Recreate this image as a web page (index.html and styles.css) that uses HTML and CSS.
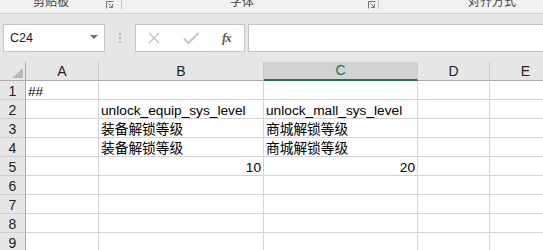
FILE: index.html
```html
<!doctype html>
<html>
<head>
<meta charset="utf-8">
<title>Sheet1</title>
<link rel="stylesheet" href="styles.css">
</head>
<body>
<div class="ribbon">
	<span class="rlabel g1">剪贴板</span>
	<svg class="launch l1" width="8" height="8" viewBox="0 0 8 8"><path d="M0.5 7.5V0.5H7.5M2.5 2.5L6.5 6.5M3 6.5H6.5V3" fill="none" stroke="#777" stroke-width="1"/></svg>
	<span class="rsep s1"></span>
	<span class="rlabel g2">字体</span>
	<svg class="launch l2" width="8" height="8" viewBox="0 0 8 8"><path d="M0.5 7.5V0.5H7.5M2.5 2.5L6.5 6.5M3 6.5H6.5V3" fill="none" stroke="#777" stroke-width="1"/></svg>
	<span class="rsep s2"></span>
	<span class="rlabel g3">对齐方式</span>
</div>

<div class="fbar">
	<div class="namebox">
		<span class="ref">C24</span>
		<span class="caret"></span>
	</div>
	<div class="grip"><i></i><i></i><i></i></div>
	<div class="fbtns">
		<svg class="ico-x" width="12" height="12" viewBox="0 0 12 12"><path d="M1 1L11 11M11 1L1 11" stroke="#bdbdbd" stroke-width="1.2"/></svg>
		<svg class="ico-ok" width="17" height="13" viewBox="0 0 17 13"><path d="M1 6.5L5.5 11L15.5 1" fill="none" stroke="#c4c4c4" stroke-width="2"/></svg>
		<span class="fx">fx</span>
	</div>
	<div class="finput"></div>
</div>

<div class="sheet">
	<div class="hd corner"><svg width="11" height="10" viewBox="0 0 11 10"><polygon points="11,0 11,10 0,10" fill="#b8b8b8"/></svg></div>
	<div class="hd col">A</div>
	<div class="hd col">B</div>
	<div class="hd col sel">C</div>
	<div class="hd col">D</div>
	<div class="hd col">E</div>

	<div class="hd row">1</div>
	<div class="c">##</div><div class="c"></div><div class="c"></div><div class="c"></div><div class="c"></div>

	<div class="hd row">2</div>
	<div class="c"></div><div class="c">unlock_equip_sys_level</div><div class="c">unlock_mall_sys_level</div><div class="c"></div><div class="c"></div>

	<div class="hd row">3</div>
	<div class="c"></div><div class="c zh">装备解锁等级</div><div class="c zh">商城解锁等级</div><div class="c"></div><div class="c"></div>

	<div class="hd row">4</div>
	<div class="c"></div><div class="c zh">装备解锁等级</div><div class="c zh">商城解锁等级</div><div class="c"></div><div class="c"></div>

	<div class="hd row">5</div>
	<div class="c"></div><div class="c num">10</div><div class="c num">20</div><div class="c"></div><div class="c"></div>

	<div class="hd row">6</div>
	<div class="c"></div><div class="c"></div><div class="c"></div><div class="c"></div><div class="c"></div>

	<div class="hd row">7</div>
	<div class="c"></div><div class="c"></div><div class="c"></div><div class="c"></div><div class="c"></div>

	<div class="hd row">8</div>
	<div class="c"></div><div class="c"></div><div class="c"></div><div class="c"></div><div class="c"></div>

	<div class="hd row">9</div>
	<div class="c"></div><div class="c"></div><div class="c"></div><div class="c"></div><div class="c"></div>
</div>
</body>
</html>
```

FILE: styles.css
```css
html,
body {
	margin: 0;
	height: 100%;
	overflow: hidden;
}
body {
	background: #e6e6e6;
	font-family: "Liberation Sans", "Noto Sans CJK SC", sans-serif;
	color: #000;
}

/* ribbon group captions, cut off at the top */
.ribbon {
	display: flex;
	align-items: flex-start;
	height: 13px;
	overflow: hidden;
	background: #f1f1f1;
	border-bottom: 1px solid #d5d5d5;
}
.rlabel {
	font-family: "Noto Sans CJK SC", sans-serif;
	font-size: 12px;
	line-height: 12px;
	margin-top: -5px;
	color: #444;
	white-space: nowrap;
}
.g1 { margin-left: 33px; }
.g2 { margin-left: 108px; }
.g3 { margin-left: 89px; }
.launch {
	flex: none;
	margin-top: 1px;
}
.l1 { margin-left: 37px; }
.l2 { margin-left: 114px; }
.rsep {
	flex: none;
	width: 1px;
	height: 9px;
	background: #c8c8c8;
}
.s1 { margin-left: 7px; }
.s2 { margin-left: 2px; }

/* formula bar */
.fbar {
	display: flex;
	padding: 10px 0 10px 3px;
}
.namebox,
.fbtns,
.finput {
	box-sizing: border-box;
	height: 28px;
	background: #fff;
	border: 1px solid #c6c6c6;
}
.namebox {
	display: flex;
	align-items: center;
	width: 102px;
	padding: 0 6px;
}
.ref {
	font-size: 12.5px;
	color: #222;
}
.caret {
	margin-left: auto;
	margin-top: -3px;
	border-left: 4px solid transparent;
	border-right: 4px solid transparent;
	border-top: 4px solid #707070;
}
.grip {
	display: flex;
	flex-direction: column;
	align-items: center;
	justify-content: center;
	gap: 2px;
	width: 30px;
}
.grip i {
	width: 2px;
	height: 2px;
	background: #b8b8b8;
}
.fbtns {
	display: flex;
	align-items: center;
	width: 110px;
	padding-left: 12px;
}
.ico-ok { margin-left: 23px; }
.fx {
	margin-left: 22px;
	font-family: "Liberation Serif", serif;
	font-style: italic;
	font-weight: bold;
	font-size: 13px;
	letter-spacing: -1px;
	color: #5a5a5a;
}
.finput {
	flex: 1;
	margin-left: 3px;
	margin-right: -2px;
}

/* grid */
.sheet {
	display: grid;
	grid-template-columns: 26px 73px 165px 154px 72px 72px;
	grid-auto-rows: 19px;
	width: 562px;
	background: #fff;
}
.sheet > div {
	box-sizing: border-box;
	display: flex;
	align-items: flex-end;
	border-right: 1px solid #d4d4d4;
	border-bottom: 1px solid #d4d4d4;
	font-size: 13.7px;
	line-height: 15px;
	white-space: nowrap;
	overflow: hidden;
}
.c {
	padding: 0 2px;
}
.zh {
	font-size: 14.6px;
	line-height: 16px;
}
.num {
	justify-content: flex-end;
}
.sheet > .hd {
	background: #e6e6e6;
	color: #222;
	font-size: 14px;
	justify-content: center;
	padding-bottom: 1px;
}
.sheet > .col {
	border-right-color: #c8c8c8;
	border-bottom-color: #ababab;
}
.sheet > .row {
	border-right-color: #ababab;
	border-bottom-color: #cfcfcf;
	padding-bottom: 0;
}
.sheet > .corner {
	justify-content: flex-end;
	padding: 0 2px 2px 0;
	border-right-color: #ababab;
	border-bottom-color: #ababab;
}
.sheet > .sel {
	background: #d2d2d2;
	color: #217346;
	border-bottom: 2px solid #217346;
}
```
